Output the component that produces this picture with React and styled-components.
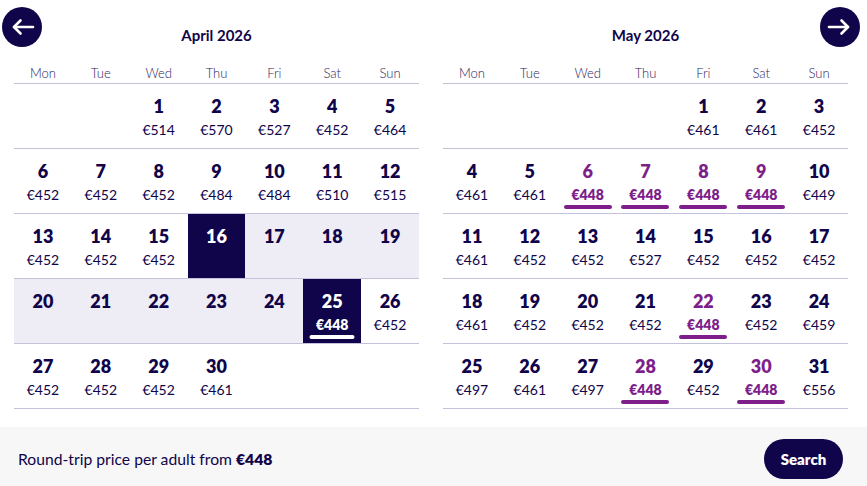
import React from 'react'
import styled, { createGlobalStyle } from 'styled-components'

const NAVY = '#10044a'
const PURPLE = '#7d1e8b'
const LINE = '#c4c1db'
const RANGE = '#eeedf5'

const GlobalStyle = createGlobalStyle`
  body {
    margin: 0;
    background: #ffffff;
    font-family: Lato, 'Noto Sans', sans-serif;
    color: ${NAVY};
  }
`

const weekdays = ['Mon', 'Tue', 'Wed', 'Thu', 'Fri', 'Sat', 'Sun']

// state: '' | 'start' | 'end' | 'range' | 'cheap'
const april = {
  title: 'April 2026',
  offset: 2,
  days: [
    [1, 514], [2, 570], [3, 527], [4, 452], [5, 464],
    [6, 452], [7, 452], [8, 452], [9, 484], [10, 484], [11, 510], [12, 515],
    [13, 452], [14, 452], [15, 452], [16, null, 'start'], [17, null, 'range'], [18, null, 'range'], [19, null, 'range'],
    [20, null, 'range'], [21, null, 'range'], [22, null, 'range'], [23, null, 'range'], [24, null, 'range'], [25, 448, 'end'], [26, 452],
    [27, 452], [28, 452], [29, 452], [30, 461],
  ],
}

const may = {
  title: 'May 2026',
  offset: 4,
  days: [
    [1, 461], [2, 461], [3, 452],
    [4, 461], [5, 461], [6, 448, 'cheap'], [7, 448, 'cheap'], [8, 448, 'cheap'], [9, 448, 'cheap'], [10, 449],
    [11, 461], [12, 452], [13, 452], [14, 527], [15, 452], [16, 452], [17, 452],
    [18, 461], [19, 452], [20, 452], [21, 452], [22, 448, 'cheap'], [23, 452], [24, 459],
    [25, 497], [26, 461], [27, 497], [28, 448, 'cheap'], [29, 452], [30, 448, 'cheap'], [31, 556],
  ],
}

const ArrowIcon = ({ dir }) => (
  <svg width="40" height="40" viewBox="0 0 40 40" fill="none" stroke="#fff" strokeWidth="2.6" strokeLinecap="round" strokeLinejoin="round">
    {dir === 'left' ? (
      <>
        <path d="M31 20H12" />
        <path d="M18.5 13.5 12 20l6.5 6.5" />
      </>
    ) : (
      <>
        <path d="M9 20h19" />
        <path d="M21.5 13.5 28 20l-6.5 6.5" />
      </>
    )}
  </svg>
)

const Month = ({ data }) => {
  const cells = []
  for (let i = 0; i < data.offset; i++) cells.push(null)
  data.days.forEach((d) => cells.push(d))
  while (cells.length % 7) cells.push(null)

  return (
    <MonthBox>
      <MonthTitle>{data.title}</MonthTitle>
      <WeekRow>
        {weekdays.map((w) => (
          <WeekLabel key={w}>{w}</WeekLabel>
        ))}
      </WeekRow>
      <DaysGrid>
        {cells.map((c, i) =>
          c ? (
            <DayCell key={i} $state={c[2] || ''}>
              <DayNum>{c[0]}</DayNum>
              {c[1] && <Price $state={c[2] || ''}>€{c[1]}</Price>}
            </DayCell>
          ) : (
            <DayCell key={i} $state="" />
          )
        )}
      </DaysGrid>
    </MonthBox>
  )
}

const App = () => (
  <>
    <GlobalStyle />
    <Page>
      <Calendars>
        <NavButton $side="left" aria-label="Previous month">
          <ArrowIcon dir="left" />
        </NavButton>
        <Month data={april} />
        <Month data={may} />
        <NavButton $side="right" aria-label="Next month">
          <ArrowIcon dir="right" />
        </NavButton>
      </Calendars>
      <Footer>
        <FooterText>
          Round-trip price per adult from <strong>€448</strong>
        </FooterText>
        <SearchBtn>Search</SearchBtn>
      </Footer>
    </Page>
  </>
)

export default App

const Page = styled.div`
  width: 867px;
  height: 486px;
  display: flex;
  flex-direction: column;
  overflow: hidden;
`

const Calendars = styled.div`
  position: relative;
  height: 427px;
  display: flex;
  gap: 24px;
  padding: 0 19px 0 14px;
  box-sizing: border-box;
`

const NavButton = styled.button`
  position: absolute;
  top: 7px;
  ${(p) => (p.$side === 'left' ? 'left: 2px;' : 'right: 7px;')}
  width: 40px;
  height: 40px;
  padding: 0;
  border: none;
  border-radius: 50%;
  background: ${NAVY};
  display: flex;
  align-items: center;
  justify-content: center;
  cursor: pointer;
`

const MonthBox = styled.div`
  width: 405px;
  display: flex;
  flex-direction: column;
`

const MonthTitle = styled.div`
  margin-top: 24px;
  height: 22px;
  line-height: 22px;
  text-align: center;
  font-size: 15px;
  font-weight: 700;
`

const WeekRow = styled.div`
  margin-top: 16px;
  display: grid;
  grid-template-columns: repeat(7, 1fr);
  border-bottom: 1px solid ${LINE};
  height: 21px;
`

const WeekLabel = styled.div`
  text-align: center;
  font-size: 13px;
  font-weight: 300;
  line-height: 22px;
  color: #2b2660;
`

const DaysGrid = styled.div`
  display: grid;
  grid-template-columns: repeat(7, 1fr);
  grid-auto-rows: 65px;
`

const cellBg = (s) => (s === 'start' || s === 'end' ? NAVY : s === 'range' ? RANGE : 'transparent')

const DayCell = styled.div`
  box-sizing: border-box;
  border-bottom: 1px solid ${LINE};
  background: ${(p) => cellBg(p.$state)};
  color: ${(p) => (p.$state === 'start' || p.$state === 'end' ? '#fff' : p.$state === 'cheap' ? PURPLE : NAVY)};
  display: flex;
  flex-direction: column;
  align-items: center;
  padding-top: 11px;
`

const DayNum = styled.div`
  font-size: 18px;
  font-weight: 800;
  line-height: 22px;
`

const Price = styled.div`
  margin-top: 4px;
  font-size: 14px;
  line-height: 18px;
  font-weight: ${(p) => (p.$state ? 800 : 400)};
  position: relative;

  ${(p) =>
    p.$state === 'cheap' || p.$state === 'end'
      ? `
    &::after {
      content: '';
      position: absolute;
      left: 50%;
      transform: translateX(-50%);
      bottom: -5px;
      width: ${p.$state === 'end' ? 45 : 48}px;
      height: 4px;
      border-radius: 2px;
      background: ${p.$state === 'end' ? '#fff' : PURPLE};
    }
  `
      : ''}
`

const Footer = styled.div`
  flex: 1;
  background: #f7f7f7;
  display: flex;
  align-items: center;
  justify-content: space-between;
  padding: 0 24px 0 18px;
`

const FooterText = styled.div`
  font-size: 15.7px;
  line-height: 20px;
  margin-top: 5px;

  strong {
    font-weight: 800;
  }
`

const SearchBtn = styled.button`
  height: 40px;
  width: 79px;
  margin-top: 5px;
  border: none;
  border-radius: 20px;
  background: ${NAVY};
  color: #fff;
  font-family: Lato, 'Noto Sans', sans-serif;
  font-size: 15px;
  font-weight: 800;
  cursor: pointer;
`
